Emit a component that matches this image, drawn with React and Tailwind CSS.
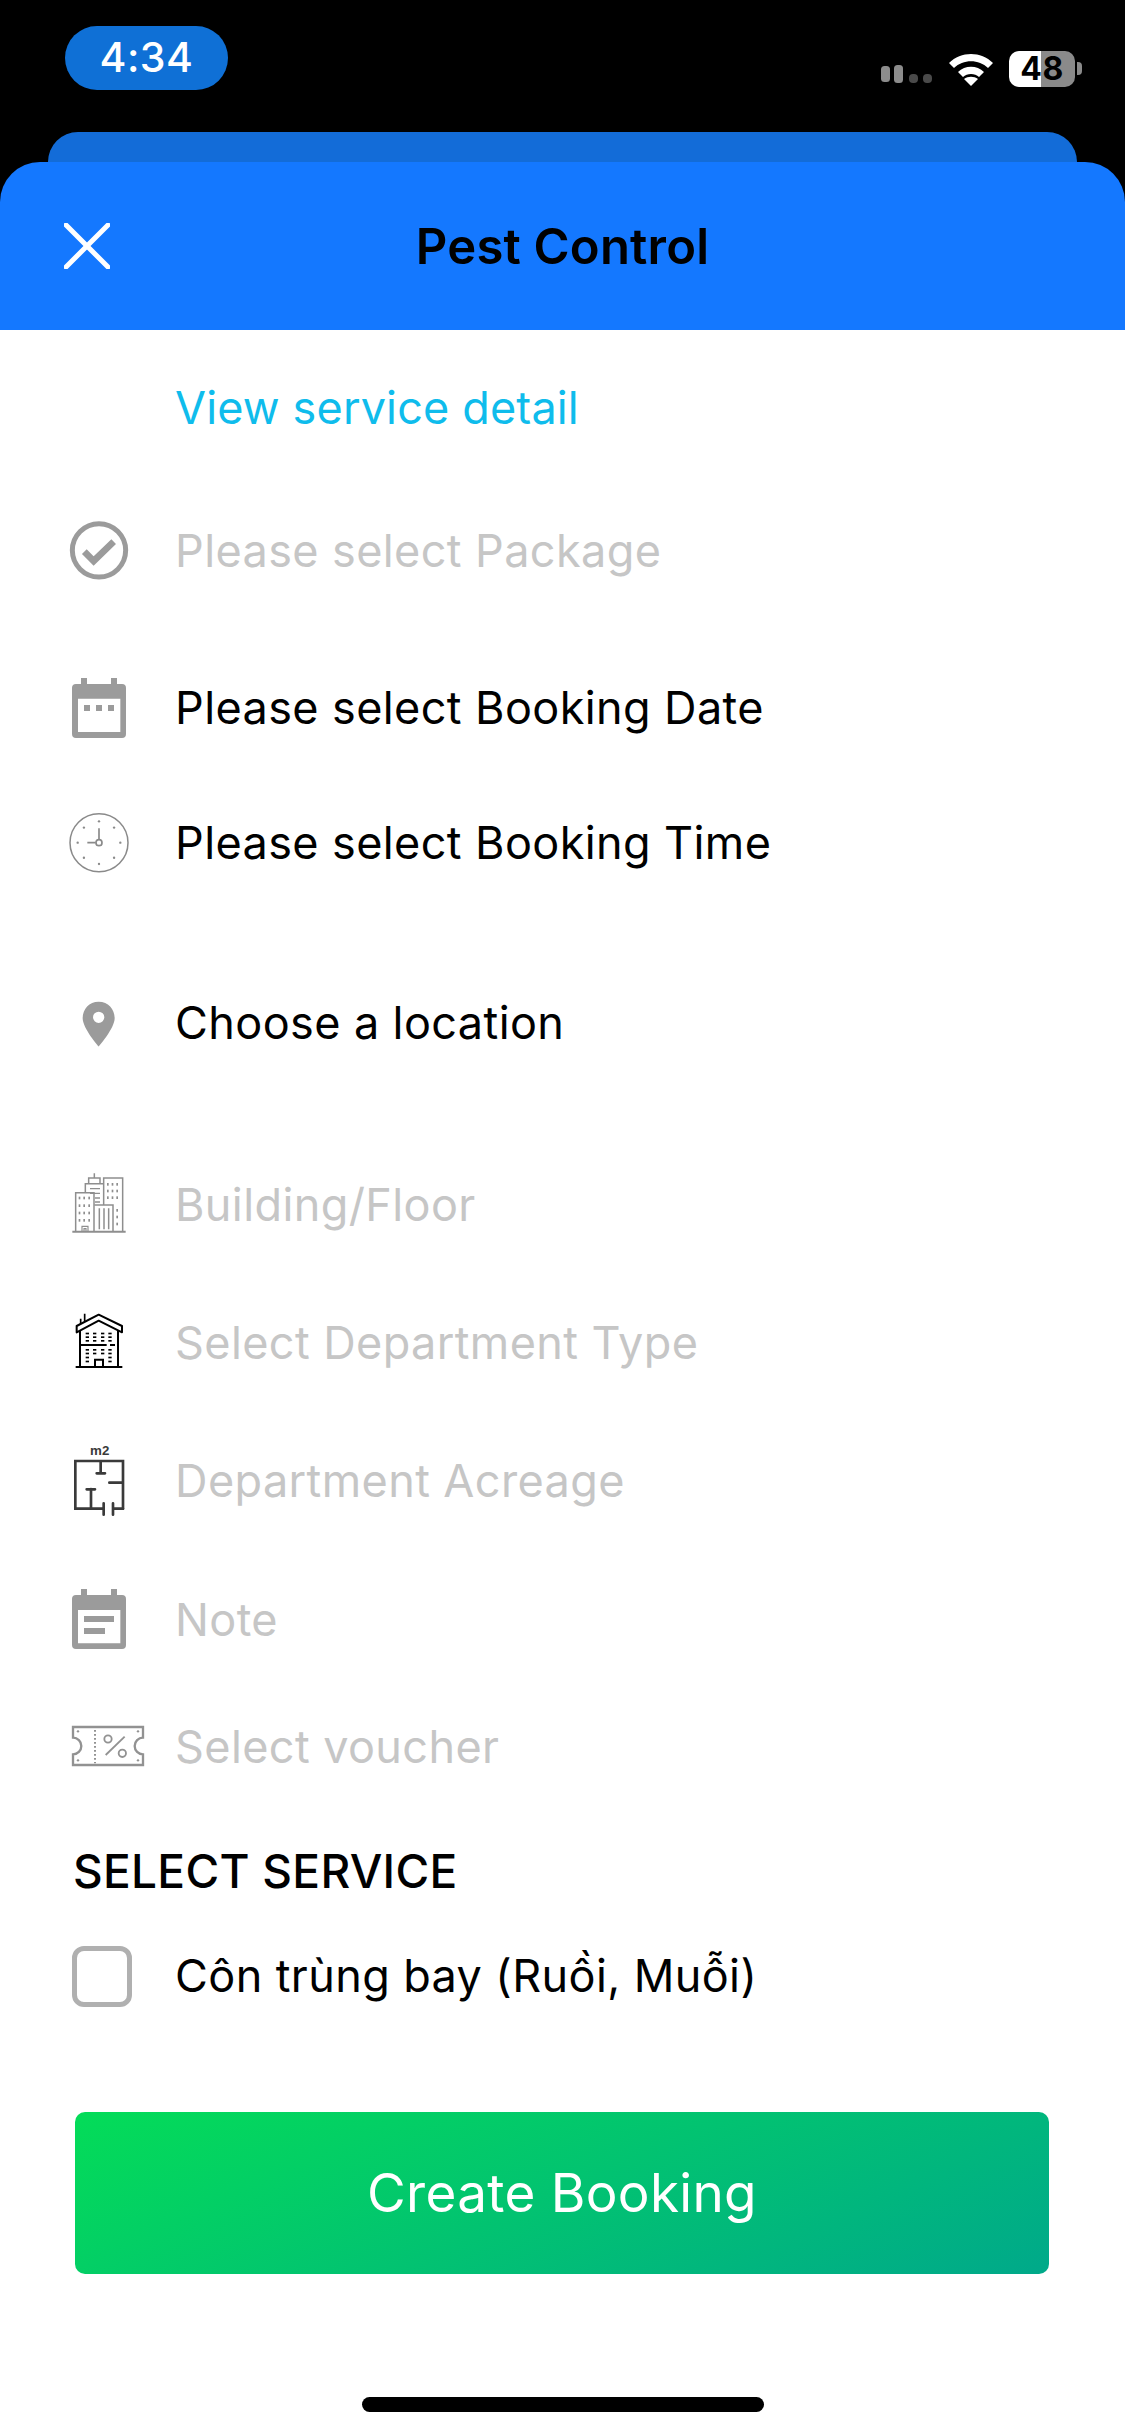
const G = "#9b9b9b";

function Slot({ y, children, vb, h = 72 }) {
  return (
    <svg width="90" height={h} viewBox={vb || `60 ${y} 270 216`} className="shrink-0" fill="none">
      {children}
    </svg>
  );
}

const CheckIcon = () => (
  <Slot y={48}>
    <circle cx="177" cy="151" r="80" stroke={G} strokeWidth="15" />
    <path d="M133 155 L161 183 L221 125" stroke={G} strokeWidth="20" />
  </Slot>
);

const CalIcon = () => (
  <Slot y={519}>
    <path fillRule="evenodd" clipRule="evenodd" fill={G} d="M123 534h18v18h72v-18h18v18h15a12 12 0 0 1 12 12v138a12 12 0 0 1-12 12H108a12 12 0 0 1-12-12V564a12 12 0 0 1 12-12h15zM114 596v100h127V596z" />
    <rect x="132" y="615" width="18" height="18" fill={G} />
    <rect x="168" y="615" width="18" height="18" fill={G} />
    <rect x="204" y="615" width="18" height="18" fill={G} />
  </Slot>
);

const ClockIcon = () => {
  const ticks = [];
  for (let i = 0; i < 8; i++) {
    const a = (i * Math.PI) / 4;
    ticks.push(<circle key={i} cx={177 + 64 * Math.sin(a)} cy={1028 - 64 * Math.cos(a)} r="3.5" fill="#8a8a8a" />);
  }
  return (
    <Slot y={924}>
      <circle cx="177" cy="1028" r="87" stroke="#8a8a8a" strokeWidth="4.5" />
      {ticks}
      <path d="M177 985V1018M142 1028H167" stroke="#8a8a8a" strokeWidth="5" />
      <circle cx="177" cy="1028" r="9" stroke="#8a8a8a" strokeWidth="5" />
    </Slot>
  );
};

const PinIcon = () => (
  <Slot y={84}>
    <path fillRule="evenodd" clipRule="evenodd" fill={G} d="M176 125C147 125 128 148 128 175C128 205 176 260 176 260C176 260 224 205 224 175C224 148 205 125 176 125ZM176 155a17 17 0 1 1 0 34a17 17 0 0 1 0-34Z" />
  </Slot>
);

const BuildingIcon = () => {
  const c = "#8e8e8e";
  const dots = [];
  [118, 132, 147].forEach((x) => [714, 737, 759, 781].forEach((y) => dots.push(<rect key={`a${x}${y}`} x={x - 2} y={y - 4} width="5" height="8" fill={c} />)));
  [203, 217, 231].forEach((x) => [673, 693, 713].forEach((y) => dots.push(<rect key={`b${x}${y}`} x={x - 2} y={y - 4} width="5" height="8" fill={c} />)));
  [751, 771, 792].forEach((y) => dots.push(<rect key={`c${y}`} x="229" y={y - 4} width="5" height="8" fill={c} />));
  return (
    <Slot y={630}>
      <g stroke={c} strokeWidth="4.5">
        <path d="M97 815H257" strokeWidth="6" />
        <path d="M107 815V698H162V815" />
        <path d="M136 698V671H190M146 671V654H180V671M163 654V640" />
        <path d="M191 735V654H248V815" />
        <path d="M163 735H219V815M178 745V808M192 745V808M206 745V808" />
        <path d="M150 686H180M150 700H180M165 714H180M165 726H180" strokeWidth="4" />
        <path d="M126 815V799H144V815M132 815V806H138V815" strokeWidth="3.5" />
      </g>
      {dots}
    </Slot>
  );
};

const HouseIcon = () => {
  const d = [];
  [82, 104, 128, 150].forEach((x) => {
    [100, 111, 122, 149, 160, 172, 184].forEach((y) => {
      if (y >= 172 && x > 95 && x < 140) return;
      d.push(<rect key={`${x}-${y}`} x={x - 5} y={y - 2} width="10" height="5" fill="#000" />);
    });
  });
  return (
    <Slot vb="0 24 270 216">
      <g stroke="#000" strokeWidth="6">
        <path d="M50 97V78L116 44L186 78V97L116 62Z" strokeLinejoin="round" />
        <path d="M62 72V56M74 64V41" strokeWidth="5" />
        <path d="M60 92V201M174 92V201M47 201H187" />
        <path d="M60 135H140M150 135H165" />
        <path d="M105 201V179H129V201" />
      </g>
      {d}
    </Slot>
  );
};

const FloorIcon = () => (
  <Slot vb="60 126 270 240" h={80}>
    <text x="179" y="164" textAnchor="middle" fontFamily="'Liberation Sans', sans-serif" fontWeight="700" fontSize="40" fill="#3a3a3a">m2</text>
    <g stroke="#3a3a3a" strokeWidth="8" strokeLinecap="round">
      <path d="M249 326V183H106V326H191" />
      <path d="M219 326H249M191 310V344M219 310V344" />
      <path d="M182 185V220M170 220H195M208 248H247M153 267V324M140 268H165" />
    </g>
  </Slot>
);

const NoteIcon = () => (
  <Slot y={555}>
    <path fillRule="evenodd" clipRule="evenodd" fill={G} d="M123 567h18v18h72v-18h18v18h15a12 12 0 0 1 12 12v138a12 12 0 0 1-12 12H108a12 12 0 0 1-12-12V597a12 12 0 0 1 12-12h15zM114 630v100h127V630z" />
    <rect x="132" y="648" width="90" height="18" fill={G} />
    <rect x="132" y="684" width="63" height="18" fill={G} />
  </Slot>
);

const VoucherIcon = () => {
  const c = "#929292";
  return (
    <Slot y={936}>
      <path d="M99 981H309V1013A25 25 0 0 0 309 1063V1095H99V1063A25 25 0 0 0 99 1013Z" stroke={c} strokeWidth="7" />
      <path d="M165 990V1090" stroke={c} strokeWidth="6" strokeDasharray="5 7" />
      <circle cx="204" cy="1017" r="11" stroke={c} strokeWidth="5.5" />
      <circle cx="247" cy="1060" r="11" stroke={c} strokeWidth="5.5" />
      <path d="M197 1065L254 1010" stroke={c} strokeWidth="5.5" />
      <circle cx="114" cy="994" r="3.5" fill={c} />
      <circle cx="294" cy="994" r="3.5" fill={c} />
      <circle cx="114" cy="1081" r="3.5" fill={c} />
      <circle cx="294" cy="1081" r="3.5" fill={c} />
    </Slot>
  );
};

function Row({ mt, icon, muted, children }) {
  return (
    <div className={`flex h-[80px] items-center gap-[25px] pl-[60px] ${mt}`}>
      <div className="flex h-[80px] w-[90px] shrink-0 items-center">{icon}</div>
      <span className={`pb-[3px] text-[45px] leading-none tracking-[0.4px] ${muted ? "text-[#c6c6c6]" : "text-black"}`}>{children}</span>
    </div>
  );
}

function StatusBar() {
  return (
    <div className="flex h-[132px] items-start justify-between bg-black pl-[65px] pr-[43px]">
      <div className="mt-[26px] flex h-[64px] w-[163px] items-center justify-center rounded-[32px] bg-[#0f70d6] text-[41px] font-medium tracking-[0.5px] text-white">
        4:34
      </div>
      <div className="mt-[51px] flex items-start">
        <svg width="52" height="20" viewBox="0 0 52 20" className="mt-[14px]">
          <rect x="0" y="1" width="9" height="16" rx="3.5" fill="#8c8c8c" />
          <rect x="13" y="0" width="9" height="18" rx="3.5" fill="#8c8c8c" />
          <rect x="28" y="9" width="9" height="9" rx="4" fill="#4a4a4a" />
          <rect x="42" y="9" width="9" height="9" rx="4" fill="#4a4a4a" />
        </svg>
        <svg width="46" height="34" viewBox="0 0 46 34" className="ml-[15px] mt-[1px]">
          <path d="M1 11C13 -1 33 -1 45 11L40 16C31 7 15 7 6 16Z" fill="#fff" />
          <path d="M10 20C17 13 29 13 36 20L31 25C27 21 19 21 15 25Z" fill="#fff" />
          <path d="M23 34L16 27C20 24 26 24 30 27Z" fill="#fff" />
        </svg>
        <div className="ml-[15px] flex h-[36px] w-[66px] items-center justify-center rounded-[10px] bg-[linear-gradient(90deg,#ffffff_0%,#ffffff_48.5%,#8a8a8a_48.5%,#8a8a8a_100%)] text-[32px] font-bold leading-none tracking-[0.5px] text-black">
          48
        </div>
        <div className="ml-[2px] mt-[11px] h-[13px] w-[5px] rounded-r-[4px] bg-[#8a8a8a]" />
      </div>
    </div>
  );
}

export default function App() {
  return (
    <div className="flex h-[2436px] w-[1125px] flex-col bg-white font-['Inter','Liberation_Sans',sans-serif] text-black">
      <div className="bg-black">
        <StatusBar />
        <div className="mx-[48px] h-[30px] rounded-t-[30px] bg-[#136cd8]" />
        <div className="grid h-[168px] grid-cols-[1fr_auto_1fr] items-center rounded-t-[40px] bg-[#1478ff]">
          <div className="pl-[64px]">
            <svg width="46" height="46" viewBox="0 0 46 46" className="block">
              <path d="M2 2L44 44M44 2L2 44" stroke="#fff" strokeWidth="5" strokeLinecap="round" />
            </svg>
          </div>
          <div className="text-[49px] font-semibold leading-none tracking-[0.2px] text-black">Pest Control</div>
          <div />
        </div>
      </div>

      <div className="mt-[39px] flex h-[80px] items-center pb-[3px] pl-[175px] text-[45px] leading-none tracking-[0.15px] text-[#0fbcec]">
        View service detail
      </div>
      <Row mt="mt-[63px]" icon={<CheckIcon />} muted>Please select Package</Row>
      <Row mt="mt-[77px]" icon={<CalIcon />}>Please select Booking Date</Row>
      <Row mt="mt-[55px]" icon={<ClockIcon />}>Please select Booking Time</Row>
      <Row mt="mt-[100px]" icon={<PinIcon />}>Choose a location</Row>
      <Row mt="mt-[102px]" icon={<BuildingIcon />} muted>Building/Floor</Row>
      <Row mt="mt-[58px]" icon={<HouseIcon />} muted>Select Department Type</Row>
      <Row mt="mt-[58px]" icon={<FloorIcon />} muted>Department Acreage</Row>
      <Row mt="mt-[59px]" icon={<NoteIcon />} muted>Note</Row>
      <Row mt="mt-[47px]" icon={<VoucherIcon />} muted>Select voucher</Row>

      <div className="mt-[44px] flex h-[80px] items-center pb-[3px] pl-[73px] text-[46px] font-medium leading-none tracking-[0.3px] text-black">
        SELECT SERVICE
      </div>
      <div className="mt-[25px] flex h-[80px] items-center pl-[72px]">
        <div className="mb-[2px] h-[61px] w-[60px] shrink-0 rounded-[12px] border-[5px] border-[#b0b0b0]" />
        <span className="ml-[43px] pb-[3px] text-[45px] leading-none tracking-[0.4px] text-black">Côn trùng bay (Ruồi, Muỗi)</span>
      </div>

      <div className="mx-[75px] mt-[95px] flex h-[162px] w-[974px] items-center justify-center rounded-[10px] bg-[linear-gradient(155deg,#04dc58_0%,#00a98a_100%)] text-[53px] leading-none tracking-[0.3px] text-white">
        Create Booking
      </div>

      <div className="mx-auto mt-[123px] h-[15px] w-[402px] rounded-full bg-black" />
    </div>
  );
}
